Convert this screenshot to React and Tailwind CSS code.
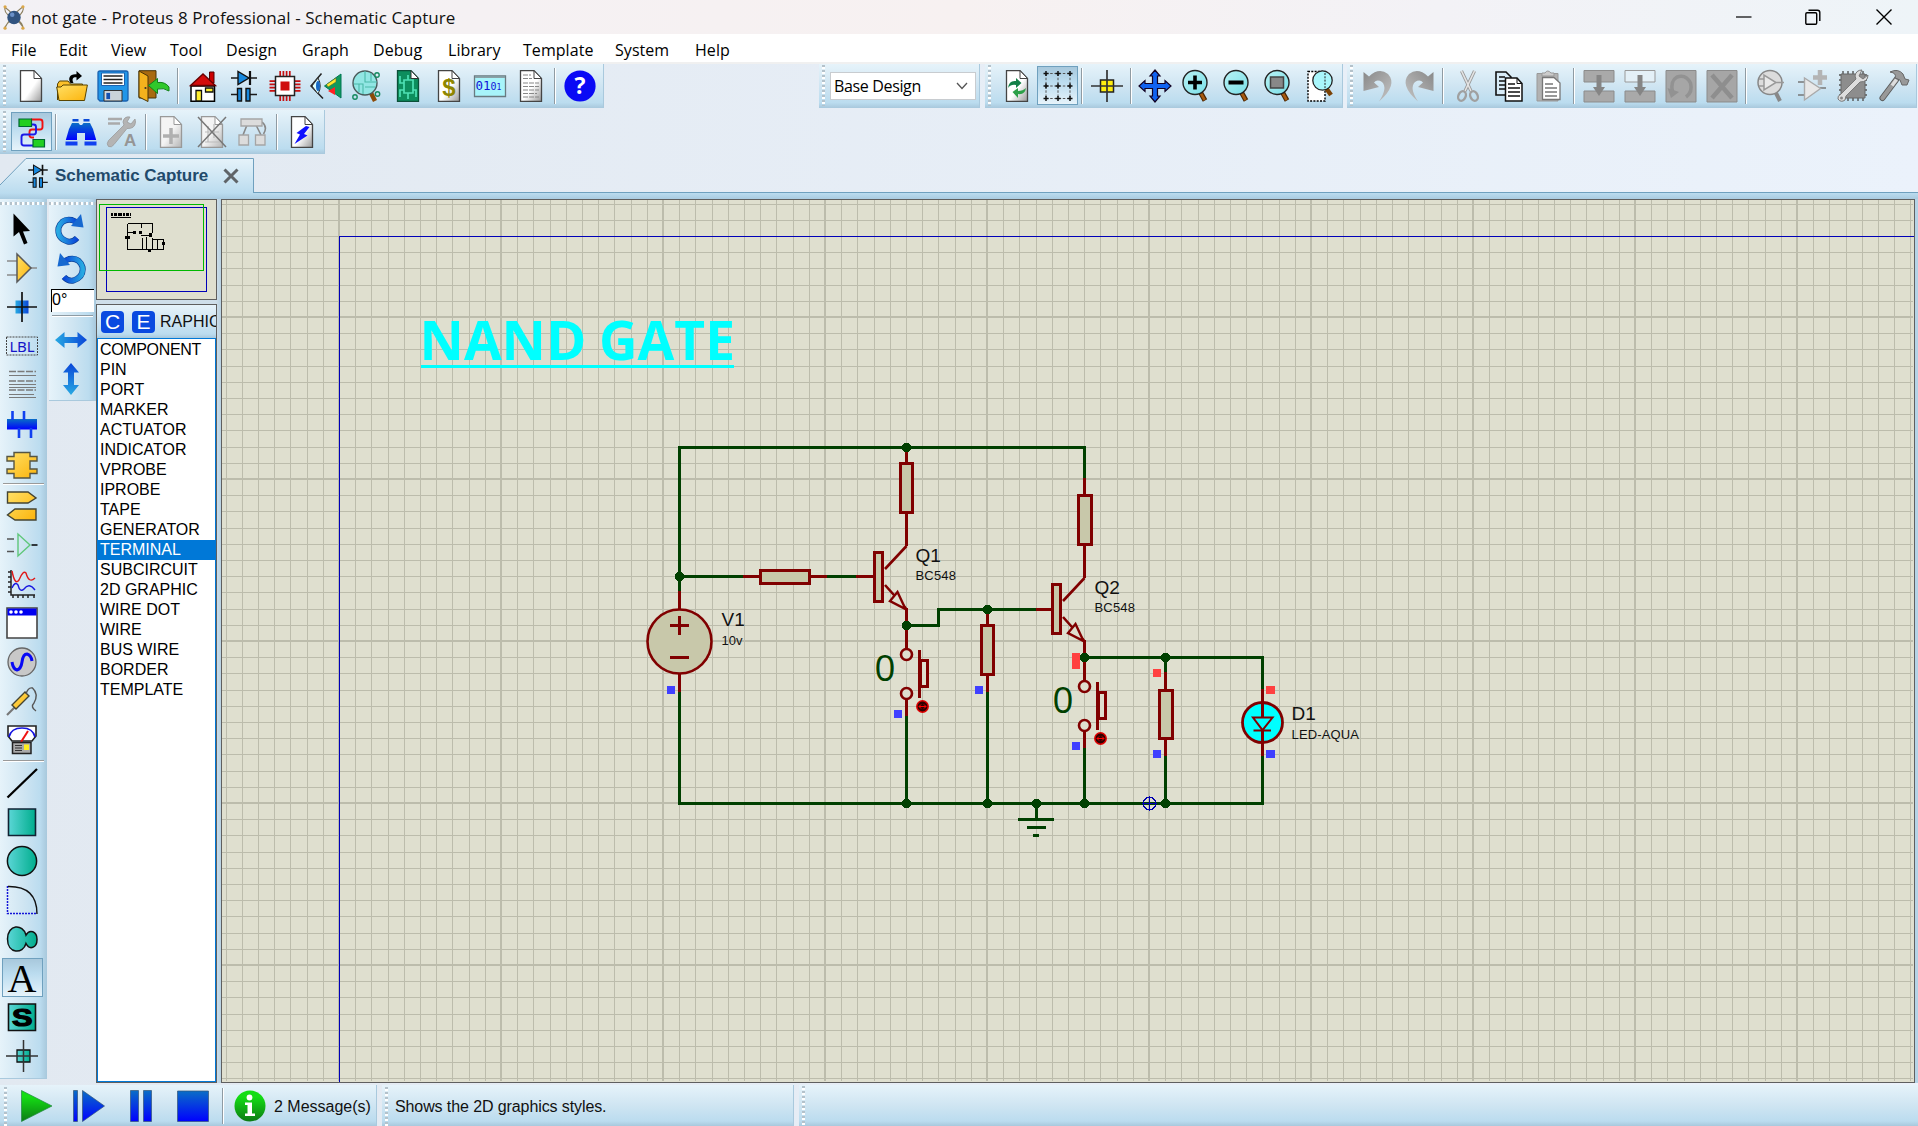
import React from "react";

const BAR = "bg-[linear-gradient(to_bottom,#e6f3fa_0%,#cfe5f2_50%,#bbdcef_88%,#a8c8dc_100%)]";
const VBAR = "bg-[linear-gradient(to_right,#e6f3fa_0%,#cfe5f2_50%,#bbdcef_85%,#a8c8dc_100%)]";
const PRESSED = "border border-[#6fa0be] bg-[linear-gradient(to_bottom,#a8c8dc,#bbdcef_40%,#e6f3fa)]";

const Ic = ({ children, className = "" }) => (
  <svg viewBox="0 0 32 32" className={"h-8 w-8 shrink-0 overflow-visible " + className} fill="none">{children}</svg>
);

const Btn = ({ children, pressed }) => (
  <div className={"flex h-[39px] w-[41px] shrink-0 items-center justify-center " + (pressed ? PRESSED : "")}>{children}</div>
);
const Sep = ({ narrow }) => (
  <div className={"flex h-[36px] shrink-0 justify-center " + (narrow ? "w-[7px]" : "w-[8px]")}>
    <div className="w-px bg-[#8f9ba3]" /><div className="w-px bg-white" />
  </div>
);
const HSep = () => <div className="mx-auto my-px h-[2px] w-[41px] shrink-0 border-t border-[#9a9a9a] bg-white" />;
const Grip = ({ tall = "h-[41px]" }) => (
  <div className={"w-[3px] shrink-0 bg-[repeating-linear-gradient(to_bottom,#b4c2cb_0_2px,#fff_2px_4px,transparent_4px_5px)] " + tall} />
);
const HGrip = () => (
  <div className="h-[3px] shrink-0 bg-[repeating-linear-gradient(to_right,#b4c2cb_0_2px,#fff_2px_4px,transparent_4px_5px)]" />
);

const Defs = () => (
  <svg className="absolute h-0 w-0">
    <defs>
      <linearGradient id="page" x1="0" y1="0" x2="1" y2="1"><stop offset=".55" stopColor="#fff" /><stop offset="1" stopColor="#999" /></linearGradient>
      <linearGradient id="pageDim" x1="0" y1="0" x2="1" y2="1"><stop offset=".5" stopColor="#f4f4f4" /><stop offset="1" stopColor="#b5b5b5" /></linearGradient>
      <linearGradient id="blueV" x1="0" y1="0" x2="0" y2="1"><stop stopColor="#0a6ec6" /><stop offset="1" stopColor="#0000ff" /></linearGradient>
      <linearGradient id="blueH" x1="0" y1="0" x2="1" y2="0"><stop stopColor="#28a9e2" /><stop offset="1" stopColor="#0a46d8" /></linearGradient>
      <linearGradient id="blueUp" x1="0" y1="0" x2="0" y2="1"><stop stopColor="#0a46d8" /><stop offset="1" stopColor="#28a9e2" /></linearGradient>
      <linearGradient id="gold" x1="0" y1="0" x2="1" y2="1"><stop stopColor="#ffe066" /><stop offset="1" stopColor="#fcb40c" /></linearGradient>
      <linearGradient id="teal" x1="0" y1="0" x2="1" y2="0"><stop stopColor="#5bd6d6" /><stop offset="1" stopColor="#00ad8d" /></linearGradient>
      <linearGradient id="green" x1="0" y1="0" x2="0" y2="1"><stop offset=".2" stopColor="#14dd14" /><stop offset="1" stopColor="#0c7a14" /></linearGradient>
      <linearGradient id="grey" x1="0" y1="0" x2="1" y2="1"><stop stopColor="#888" /><stop offset="1" stopColor="#c4c4c4" /></linearGradient>
      <linearGradient id="lens" x1="0" y1="0" x2="1" y2="1"><stop stopColor="#b8f2f4" /><stop offset="1" stopColor="#7adfe8" /></linearGradient>
      <linearGradient id="arm" x1="0" y1="0" x2="1" y2="1"><stop stopColor="#0b3fb8" /><stop offset=".5" stopColor="#1f8fe0" /><stop offset="1" stopColor="#1250c8" /></linearGradient>
    </defs>
  </svg>
);

const Sheet = ({ dim, children }) => (
  <Ic>
    <path d="M5.500 .700H19L26.500 8.500V31.300H5.500Z" fill={dim ? "url(#pageDim)" : "url(#page)"} stroke={dim ? "#999" : "#444"} strokeWidth="1.300" />
    <path d="M19 .700V8.500H26.500Z" fill="#fff" stroke={dim ? "#999" : "#444"} />
    {children}
  </Ic>
);
const DiodeCap = ({ className }) => (
  <Ic className={className}>
    <path d="M3 8H29M3 24.500H13M19 24.500H29" stroke="#1a1a1a" strokeWidth="1.700" />
    <path d="M10 1.500V14.500L21 8Z" fill="#1788de" stroke="#111" strokeWidth="1.400" />
    <path d="M22 1V15" stroke="#111" strokeWidth="2.200" />
    <path d="M9.500 18.500H13.500V31H9.500ZM18 18.500H22V31H18Z" fill="#1788de" stroke="#111" strokeWidth="1.400" />
  </Ic>
);
const Lens = ({ children, cx = 15, cy = 12.5 }) => (
  <Ic>
    <path d={`M${cx + 5} ${cy + 9}L${cx + 10} ${cy + 18}`} stroke="#4a2500" strokeWidth="5" />
    <path d={`M${cx + 6} ${cy + 11}L${cx + 9.6} ${cy + 17.5}`} stroke="#a85a10" strokeWidth="2.600" />
    <circle cx={cx} cy={cy} r="12" fill="url(#lens)" stroke="#222" strokeWidth="1.400" />
    {children}
  </Ic>
);
const Rotate = ({ className }) => (
  <Ic className={className}>
    <path d="M24 24Q20 28.500 14.500 27.500Q4 24 5.500 14Q9 4 19 6Q22 7 24 9" stroke="#0b3e93" strokeWidth="6" />
    <path d="M24 24Q20 28.500 14.500 27.500Q4 24 5.500 14Q9 4 19 6Q22 7 24 9" stroke="url(#blueH)" strokeWidth="4.600" />
    <path d="M18 12L30.500 13.500L28 0Z" fill="#1769d0" />
  </Ic>
);
const Curl = ({ className }) => (
  <Ic className={className}><path d="M1.500 2L7 6.500Q17-3 26 4Q36 15 17 31.500Q26 18 20 12Q15 9 12 12.500L17 17L1.500 21Z" fill="url(#grey)" /></Ic>
);

const I = {
  fresh: <Sheet />,
  open: (
    <Ic>
      <path d="M1.500 30V14L3.500 11H12L14.500 14H26.500V17" fill="#fbc02a" stroke="#5a4400" />
      <path d="M.700 17H5L7 15H31.400L28.500 30.500H3Z" fill="url(#gold)" stroke="#5a4400" />
      <path d="M14.500 13C11.500 8 14 3.500 20.500 4.200V1L26 6L20.500 10.500V7.300C17 7 15.500 9 17.500 13Z" fill="#000" />
    </Ic>
  ),
  save: (
    <Ic>
      <path d="M1 3Q1 1 3 1H29Q31 1 31 3V29Q31 31 29 31H3L1 29Z" fill="#2196e8" stroke="#1a62b0" strokeWidth="1.300" />
      <path d="M4.500 3H27.500V15.500H4.500Z" fill="#fff" stroke="#1a62b0" />
      <path d="M6.500 6H25.500M6.500 9.500H25.500M6.500 13H25.500" stroke="#222" strokeWidth="1.300" />
      <path d="M7 20.500H25V31H7Z" fill="#c9d2d8" stroke="#333" /><path d="M9 22.500H13.500V29.500H9Z" fill="#1450b0" stroke="#eee" strokeWidth=".6" />
    </Ic>
  ),
  exit: (
    <Ic>
      <path d="M1 .700H18V28H1Z" fill="#a86a10" stroke="#4a3408" />
      <path d="M1 1L10 6V31.500L1 27Z" fill="#f4b21d" stroke="#4a3408" /><circle cx="7.500" cy="18" r="1.100" fill="#333" />
      <path d="M10.500 15.500L19.500 8.500V12.500Q27 11.500 31 17V21Q26 17.500 19.500 19V23.500Z" fill="#30c82c" stroke="#12821a" />
    </Ic>
  ),
  home: (
    <Ic>
      <path d="M4 16H27.500V31.300H4Z" fill="#fff" stroke="#000" strokeWidth="1.500" />
      <path d="M22.500 2H27V13H22.500Z" fill="#c00" stroke="#500" />
      <path d="M3.500 15.500L16 4L28.500 15.500Z" fill="#d40c0c" stroke="#600" strokeWidth="1.300" />
      <path d="M9 20.500H14.500V31H9ZM18.500 18H26V22H18.500Z" fill="#ffef30" stroke="#111" strokeWidth="1.300" />
    </Ic>
  ),
  schem: <DiodeCap />,
  chip: (
    <Ic>
      <path d="M11.200 1V31M14.400 1V31M17.600 1V31M20.800 1V31M.500 11.200H31.500M.500 14.400H31.500M.500 17.600H31.500M.500 20.800H31.500" stroke="#c81010" strokeWidth="1.700" />
      <path d="M6.500 6.500H25.500V25.500H6.500Z" fill="#fff" stroke="#222" strokeWidth="1.500" /><path d="M11.500 11.500H20.500V20.500H11.500Z" fill="#cf0f0f" />
    </Ic>
  ),
  eye: (
    <Ic>
      <path d="M11.500 3.500L1 16L13 28.500" stroke="#222" strokeWidth="1.500" /><path d="M8 8Q12.500 16 8 24L2 16Z" fill="#dff" stroke="#333" /><ellipse cx="8" cy="16" rx="2" ry="5" fill="#1769c4" />
      <path d="M14.500 16L31 4V28Z" fill="#0f9a5c" stroke="#075" /><path d="M16.500 14.500L26 8V12L18 17Z" fill="#ffe92e" stroke="#563" strokeWidth=".6" /><path d="M18 21L25 17V25Z" fill="#f22" />
    </Ic>
  ),
  globe: (
    <Ic>
      <path d="M20 23L24 31" stroke="#8b4a08" strokeWidth="4.500" />
      <circle cx="14" cy="13" r="12" fill="#92e6e4" stroke="#4a5a5a" strokeWidth="1.400" />
      <path d="M3 14H12V24M14 1V12H26M20 3V11M8 14V22M14 17H24" stroke="#4ab8a8" strokeWidth="1.100" />
      <circle cx="4" cy="27" r="2.200" stroke="#178a60" strokeWidth="1.400" /><circle cx="26" cy="5" r="2.200" stroke="#178a60" strokeWidth="1.400" /><circle cx="26.500" cy="24" r="2.200" stroke="#178a60" strokeWidth="1.400" />
    </Ic>
  ),
  pcb: (
    <Ic>
      <path d="M5.500 .700H19L26.500 8.500V31.300H5.500Z" fill="#0d8e5d" stroke="#0b5039" strokeWidth="1.300" /><path d="M19 .700V8.500H26.500Z" fill="#fff" stroke="#333" />
      <path d="M12 10H21V23H12ZM12 13H8V6M12 20H8V27M21 20H24V27M16 10V5M16 23V29" stroke="#4fe0b4" strokeWidth="1.700" />
    </Ic>
  ),
  dollar: <Sheet><text x="16" y="26" textAnchor="middle" fontSize="24" fontWeight="700" fontFamily="Liberation Sans" fill="#8f8600">$</text></Sheet>,
  bits: (
    <Ic>
      <path d="M.500 6H31.500V26.500H.500Z" fill="#a8f4fa" stroke="#6a7a80" strokeWidth="1.300" /><path d="M1 6.500H31V8H1Z" fill="#8aa0a6" />
      <text x="1.500" y="20" fontSize="12.500" fontFamily="DejaVu Sans Mono" fill="#1212d8">01<tspan fontSize="10">0</tspan><tspan fontSize="8">1</tspan></text>
    </Ic>
  ),
  report: <Sheet><path d="M8 5H16M8 8.500H17M8 13H24M8 16.500H24M8 20H24M8 23.500H22M8 27H24" stroke="#888" strokeWidth="1.200" strokeDasharray="5 1" /></Sheet>,
  help: (
    <Ic>
      <circle cx="16" cy="16" r="15.600" fill="#0a0af5" /><text x="16" y="24" textAnchor="middle" fontSize="23" fontWeight="700" fontFamily="Open Sans" fill="#fff">?</text>
    </Ic>
  ),
  wires: (
    <Ic>
      <path d="M15 3.500H24Q26.500 3.500 26.500 6V11Q26.500 13.500 24 13.500H16Q13.500 13.500 13.500 16V19Q13.500 21.500 16 21.500H18" stroke="#f01010" strokeWidth="1.900" />
      <path d="M15 8.500H17.500Q20 8.500 20 11V16Q20 18.500 17.500 18.500H8Q5.500 18.500 5.500 21V27Q5.500 29.500 8 29.500H17" stroke="#1a1ae8" strokeWidth="1.900" />
      <path d="M3 3H15.500V10.500H3ZM17 23.500H28.500V31H17Z" fill="#22cf22" stroke="#063" strokeWidth="1.200" />
    </Ic>
  ),
  binoc: (
    <Ic>
      <path d="M7.500 3H13.500V5.500H7.500ZM18.500 3H24.500V5.500H18.500Z" fill="#0a4ad8" />
      <path d="M7 7H13.500L15 9H17L18.500 7H25L28 13L31.200 24H20V17H12V24H.800L4 13Z" fill="url(#blueV)" />
      <path d="M.500 25.500H12.500V29.500H.500ZM19.500 25.500H31.500V29.500H19.500Z" fill="#1040f0" />
    </Ic>
  ),
  wrenchA: (
    <Ic>
      <path d="M2 3H16M2 7.500H14" stroke="#aaa" strokeWidth="2.400" /><path d="M29 3L25 8L21 6L24 1Q18 0 17 6L18 9L2.500 24.500Q0 28 2.500 30.500Q5.500 32 8 28.500L21 12.500Q29 13 29.500 6Z" fill="#b4b4b4" stroke="#9a9a9a" strokeWidth=".8" />
      <text x="18" y="30" fontSize="17" fontWeight="700" fontFamily="Liberation Sans" fill="#959595">A</text>
    </Ic>
  ),
  addDoc: <Sheet dim><path d="M16 12V28M8 20H24" stroke="#b0b0b0" strokeWidth="3.500" /></Sheet>,
  delDoc: <Sheet dim><path d="M9 16H23M12 10V26M18 8V22M9 26H24" stroke="#bbb" strokeWidth="1.200" /><path d="M2 1L30 31M30 1L2 31" stroke="#777" strokeWidth="1.500" /></Sheet>,
  hier: (
    <Ic>
      <path d="M10 9L6 19M19 9L24 19M25 6Q31 11 26.500 18" stroke="#888" strokeWidth="1.600" />
      <path d="M4 3H25V10H4ZM2 19H11.500V29H2ZM18.500 19H28V29H18.500Z" fill="#dcdcdc" stroke="#a5a5a5" strokeWidth="1.300" />
    </Ic>
  ),
  bolt: <Sheet><path d="M20 10L10.500 17L14 18.500L8.500 28L21.500 19.500L18 18L23.500 11Z" fill="#1010ff" /></Sheet>,
  refresh: <Sheet><path d="M7 18Q8 10 15 11V8L20.500 13L15 18V15Q10 14 7 18Z" fill="#148048" /><path d="M25 18Q24 25 17 24V28L11.500 22L17 18V21Q22 21 25 18Z" fill="#2da048" /></Sheet>,
  grid: (
    <Ic>
      <path d="M4 3.500H28M4 16H28M4 28.500H28M4 3.500V28.500M16 3.500V28.500M28 3.500V28.500" stroke="#555" strokeWidth="1" strokeDasharray="2.500 1.700" />
      {[4, 16, 28].map((x) => [3.5, 16, 28.5].map((y) => <path key={x + "," + y} d={`M${x - 2.5} ${y}h5M${x} ${y - 2.5}v5`} stroke="#111" strokeWidth="1.500" />))}
    </Ic>
  ),
  origin: (
    <Ic><path d="M9.500 10H22.500V22H9.500Z" fill="#ffee10" stroke="#222" strokeWidth="1.500" /><path d="M16 0V32M0 16H32" stroke="#333" strokeWidth="1.700" /></Ic>
  ),
  pan: (
    <Ic>
      <path d="M16 0L21 6H18.500V13.500H26V10.500L32 16L26 21.500V18.500H18.500V26H21L16 32L11 26H13.500V18.500H6V21.500L0 16L6 10.500V13.500H13.500V6H11Z" fill="#0f62f0" stroke="#102" strokeWidth="1.200" />
    </Ic>
  ),
  zin: <Lens><path d="M15 5.500V19.500M8 12.500H22" stroke="#000" strokeWidth="3.600" /></Lens>,
  zout: <Lens><path d="M7.500 12.500H22.500" stroke="#000" strokeWidth="4" /></Lens>,
  zall: <Lens><path d="M8.500 7H21.500V18H8.500Z" fill="#888" stroke="#444" strokeWidth="1.500" /></Lens>,
  zarea: (
    <Ic className="translate-x-px">
      <path d="M4 1.500H21V31H4Z" fill="#fff" stroke="#000" strokeWidth="1.400" strokeDasharray="2 1.300" /><path d="M22 18L27 25" stroke="#7a4206" strokeWidth="4.500" />
      <circle cx="18.500" cy="10.500" r="9.700" fill="#a9f6fb" stroke="#222" strokeWidth="1.300" /><path d="M21 3V19" stroke="#222" strokeDasharray="2 1.300" />
    </Ic>
  ),
  undo: <Curl />,
  redo: <Curl className="-scale-x-100" />,
  cut: (
    <Ic>
      <path d="M9.500 1L19 21M22.500 1L13 21" stroke="#999" strokeWidth="3.200" /><path d="M9.500 1L19 21M22.500 1L13 21" stroke="#e4e4e4" strokeWidth="1.600" />
      <ellipse cx="10" cy="26" rx="3.600" ry="5" transform="rotate(25 10 26)" stroke="#a0a0a0" strokeWidth="2.400" /><ellipse cx="22" cy="26" rx="3.600" ry="5" transform="rotate(-25 22 26)" stroke="#a0a0a0" strokeWidth="2.400" />
    </Ic>
  ),
  copy: (
    <Ic>
      <path d="M3 2H13L18 7V25H3Z" fill="#d8ecf8" stroke="#111" strokeWidth="1.600" /><path d="M6 7H12M6 11H12M6 15H12M6 19H12" stroke="#111" strokeWidth="1.400" />
      <path d="M12.500 8H24L29 13.500V31H12.500Z" fill="#fff" stroke="#111" strokeWidth="1.500" /><path d="M24 8V13.500H29" stroke="#111" /><path d="M15 14H22M15 18H27M15 22H27M15 26H27" stroke="#111" strokeWidth="1.400" />
    </Ic>
  ),
  paste: (
    <Ic>
      <path d="M3 3.500H24V31H3Z" fill="#b2b2b2" stroke="#999" /><path d="M8 6V3H11Q13.500-1 17 3H20V6Z" fill="#ccc" stroke="#999" />
      <path d="M8.500 7.500H20L26 13V29.500H8.500Z" fill="#fff" stroke="#777" strokeWidth="1.300" /><path d="M11 14H19M11 18H23M11 22H23M11 26H23" stroke="#777" strokeWidth="1.300" />
    </Ic>
  ),
  bcopy: (
    <Ic><path d="M1 .500H31V12H1ZM1 21H31V32H1Z" fill="#a9a9a9" stroke="#8b8b8b" /><path d="M13.500 5H18.500V17H22L16 26L10 17H13.500Z" fill="#858585" /></Ic>
  ),
  bmove: (
    <Ic><path d="M1 .500H31V12H1Z" fill="#e4f0f7" stroke="#999" /><path d="M1 21H31V32H1Z" fill="#a9a9a9" stroke="#8b8b8b" /><path d="M13.500 5H18.500V17H22L16 26L10 17H13.500Z" fill="#858585" /></Ic>
  ),
  brot: (
    <Ic><path d="M1 .500H31V32H1Z" fill="#a6a6a6" stroke="#8b8b8b" /><path d="M21 27Q28 22 25.500 13Q21 4 12 7Q5 11 7.500 22" stroke="#929292" strokeWidth="3.500" /><path d="M2.500 18L6 28L14 22Z" fill="#929292" /></Ic>
  ),
  bdel: (
    <Ic><path d="M1 .500H31V32H1Z" fill="#a6a6a6" stroke="#8b8b8b" /><path d="M6 5L26 28M26 5L6 28" stroke="#8e8e8e" strokeWidth="4.500" /></Ic>
  ),
  pick: (
    <Ic>
      <path d="M21 23L25 31" stroke="#888" strokeWidth="4" /><circle cx="15" cy="12.500" r="12" fill="#dcdcdc" stroke="#888" strokeWidth="1.500" /><path d="M9 5V20L21 12.500ZM4 9H9M4 16H9M21 12.500H29" stroke="#999" strokeWidth="1.500" fill="#e9e9e9" />
    </Ic>
  ),
  make: (
    <Ic><path d="M2 12H8M2 25H8M24 18H30" stroke="#777" strokeWidth="1.700" /><path d="M8.500 8V30L24.500 18.500Z" fill="#e8e8e8" stroke="#aaa" strokeWidth="1.400" /><path d="M24 0V15M17 7.500H31" stroke="#b4b4b4" strokeWidth="4.500" /></Ic>
  ),
  pack: (
    <Ic>
      <path d="M2 5H30M2 10H30M2 15H30M2 20H30M2 25H30M6 1V31M11 1V31M16 1V31M21 1V31M26 1V31" stroke="#555" strokeWidth="1.400" /><path d="M4 4H28V28H4Z" fill="#8d8d8d" stroke="#666" />
      <path d="M31 5L26 9L22 6L25 0Q19 0 18 6L19 9L4 24Q0 26 1 29Q4 33 8 30L9 26L23 12Q31 12 31 5Z" fill="#ddd" stroke="#777" /><circle cx="4.500" cy="28" r="1.500" fill="#888" />
    </Ic>
  ),
  hammer: (
    <Ic>
      <path d="M18 10L4.500 28" stroke="#555" strokeWidth="6" strokeLinecap="round" /><path d="M18 10L4.500 28" stroke="#999" strokeWidth="4.300" strokeLinecap="round" /><path d="M18.500 9.500L14 15.500" stroke="#ddd" strokeWidth="3.300" />
      <path d="M12 2Q20-2 25 4L27 9L31 10L29 15L24 15L22 10L17 8Q19 3 12 2Z" fill="#999" stroke="#666" />
    </Ic>
  ),
  arrow: <Ic><path d="M7.500 .500V23.500L13 19L18 31.500L21.500 30L17 18.500L24 18Z" fill="#000" /></Ic>,
  amp: <Ic><path d="M1 9H12M1 23H12M24 16H31" stroke="#8a8a8a" strokeWidth="1.700" /><path d="M11 2V30L25 16Z" fill="url(#gold)" stroke="#5a5a5a" strokeWidth="1.500" /></Ic>,
  junction: <Ic><path d="M9.500 9.500H22.500V22.500H9.500Z" fill="url(#blueH)" /><path d="M16 1V31M1 16H31" stroke="#111" strokeWidth="1.700" /></Ic>,
  lbl: <Ic><path d="M.500 7H31.500V25H.500Z" stroke="#444" strokeDasharray="2 1" /><text x="16" y="21.500" textAnchor="middle" fontSize="15" textLength="25" fontFamily="Noto Sans" fill="#1414c8">LBL</text></Ic>,
  script: <Ic><path d="M3 2.500H30M3 12H30M3 21H30" stroke="#7a7a7a" strokeWidth="1.300" strokeDasharray="7 1.500" /><path d="M3 6.500H30M3 15.500H30M3 28.500H30M3 18.500H30M3 25.500H28" stroke="#7a7a7a" strokeWidth="1.200" /></Ic>,
  bus: <Ic><path d="M1 11H31V21.500H1Z" fill="url(#blueV)" /><path d="M6.500 3V12M18 3V12M13 20V30M25 20V30" stroke="#1040f0" strokeWidth="2.600" /></Ic>,
  sub: <Ic className="translate-y-[2px]"><path d="M8 3.500H24V7.500H31V12H24V20H31V24.500H24V29H8V24.500H1V20H8V12H1V7.500H8Z" fill="url(#gold)" stroke="#554" strokeWidth="1.400" /></Ic>,
  term: <Ic><path d="M1.500 2H22L30 8L22 13H1.500ZM30 19H9L1.500 25L9 30H30Z" fill="url(#gold)" stroke="#443" strokeWidth="1.400" /></Ic>,
  pins: <Ic><path d="M1 10H8M1 22.500H8" stroke="#555" strokeWidth="1.700" /><path d="M12 5V27L24 16Z" stroke="#5fc77a" strokeWidth="1.400" /><path d="M25.500 16H31.500" stroke="#000" strokeWidth="1.500" /></Ic>,
  graph: (
    <Ic>
      <path d="M5 2V27H29M2 4H5M2 9H5M2 14H5M2 19H5M2 24H5M7 27V30M12 27V30M17 27V30M22 27V30M28 27V30" stroke="#222" strokeWidth="1.500" />
      <path d="M6 3Q9 18 13 12Q17 2 20 5Q23 16 29 10" stroke="#e01818" strokeWidth="1.400" /><path d="M6 20Q9 13 12 17Q14 25 18 21Q23 14 29 22" stroke="#1818e0" strokeWidth="1.400" />
    </Ic>
  ),
  tape: <Ic><path d="M1 1H31V31H1Z" fill="#fff" stroke="#444" strokeWidth="1.600" /><path d="M1.500 1.500H30.500V8.500H1.500Z" fill="#0000f0" /><circle cx="5" cy="5" r="1.800" fill="#fff" /><circle cx="10" cy="5" r="1.800" fill="#fff" /><circle cx="15" cy="5" r="1.800" fill="#fff" /></Ic>,
  gen: <Ic><circle cx="16" cy="16" r="14" fill="#c8c8c8" stroke="#666" strokeWidth="1.300" /><path d="M6 16Q7 23 11 24Q15 23 16 16Q17 8 21 8Q25 9 26 15" stroke="#0808f5" strokeWidth="3" /></Ic>,
  probe: <Ic><path d="M1 30L9 22" stroke="#777" strokeWidth="2.200" /><path d="M6 20L19 7L23 11L10 24Z" fill="url(#gold)" stroke="#443" strokeWidth="1.400" /><path d="M20 9Q22 2 26.500 3Q33 9 28 18Q24 22 30 26" stroke="#555" strokeWidth="1.400" /></Ic>,
  meter: (
    <Ic>
      <path d="M2 2H30V12L26 17H6L2 12Z" fill="#fff" stroke="#222" strokeWidth="1.600" /><path d="M3 13Q5 4 16 4Q27 4 29 13" stroke="#1414e0" strokeWidth="1.600" /><path d="M15 18L22 7" stroke="#e11" strokeWidth="2" />
      <path d="M6.500 18.500H25V29.500H6.500Z" fill="#aaa" stroke="#222" strokeWidth="1.500" /><path d="M9 21.500H16M9 24H16M9 26.500H16" stroke="#333" /><path d="M18 20.500H23V26H18Z" fill="#ffee20" />
    </Ic>
  ),
  line: <Ic><path d="M1.500 30.500L31 2" stroke="#000" strokeWidth="2.300" /></Ic>,
  box: <Ic><path d="M2.500 3H29.500V29.500H2.500Z" fill="url(#teal)" stroke="#123" strokeWidth="1.600" /></Ic>,
  circle: <Ic><circle cx="16" cy="16" r="14.600" fill="url(#teal)" stroke="#111" strokeWidth="1.500" /></Ic>,
  arc: <Ic><path d="M1.500 2V29.500H31" stroke="#1414d8" strokeWidth="1.500" strokeDasharray="2 1" /><path d="M2 2.500Q31 2 31 30" stroke="#111" strokeWidth="1.400" /></Ic>,
  blob: <Ic><path d="M20 12C17 .500 1.500 1 1.500 16C1.500 31 17 31.500 20 20.500C23.500 27.500 31 25 31 16.500C31 8 23.500 6 20 12Z" fill="url(#teal)" stroke="#111" strokeWidth="1.500" /></Ic>,
  text: <Ic><text x="16" y="30" textAnchor="middle" fontSize="40" fontFamily="Liberation Serif" fill="#000">A</text></Ic>,
  sym: <Ic><path d="M2.500 3H29.500V29.500H2.500Z" fill="url(#teal)" stroke="#111" strokeWidth="1.600" /><text x="6" y="25" fontSize="24" fontWeight="700" textLength="20.500" lengthAdjust="spacingAndGlyphs" fontFamily="Liberation Sans" fill="#000" stroke="#000" strokeWidth="1.200">S</text></Ic>,
  mark: <Ic><path d="M11 10H24V22H11Z" fill="url(#teal)" stroke="#111" strokeWidth="1.300" /><path d="M17.500 0V32M0 16H32" stroke="#333" strokeWidth="1.500" /></Ic>,
  cw: <Rotate className="-translate-x-[4px]" />,
  ccw: <Rotate className="-translate-x-px -scale-x-100" />,
  hflip: <Ic><path d="M0 16L9.500 8V13H22.500V8L32 16L22.500 24V19H9.500V24Z" fill="url(#blueH)" /></Ic>,
  vflip: <Ic><path d="M16 0L24 9.500H19V22H24L16 32L8 22H13V9.500H8Z" fill="url(#blueUp)" /></Ic>,
};

const MENUS = [["File", "w-[48px]"], ["Edit", "w-[52px]"], ["View", "w-[59px]"], ["Tool", "w-[56px]"], ["Design", "w-[76px]"], ["Graph", "w-[71px]"], ["Debug", "w-[75px]"], ["Library", "w-[75px]"], ["Template", "w-[92px]"], ["System", "w-[80px]"], ["Help", "w-[60px]"]];
const STYLES = ["COMPONENT", "PIN", "PORT", "MARKER", "ACTUATOR", "INDICATOR", "VPROBE", "IPROBE", "TAPE", "GENERATOR", "TERMINAL", "SUBCIRCUIT", "2D GRAPHIC", "WIRE DOT", "WIRE", "BUS WIRE", "BORDER", "TEMPLATE"];

const Tools = ({ items }) => items.map((n, i) => (n === "|" ? <Sep key={i} /> : <Btn key={i} pressed={n === "grid" || n === "wires"}>{I[n]}</Btn>));
const Bar = ({ className = "", children }) => (
  <div className={"flex h-[44px] items-center border-r border-[#a9c9dd] pb-px " + BAR + " " + className}>{children}</div>
);

function Header() {
  return (
    <>
      <div className="flex h-[34px] items-center bg-[linear-gradient(to_right,#f3f1f5,#f7f1f1_50%,#f3f2f6_75%,#eef4f8)]">
        <svg viewBox="0 0 24 28" className="ml-[2px] h-[25px] w-[24px]" fill="none">
          <path d="M1 2Q10 8 23 26M22 2Q12 9 1 26M2 2Q0 8 8 13M22 1Q24 8 16 13M2 27Q3 20 9 17M22 26Q22 20 16 17" stroke="#8c8060" strokeWidth="1.200" />
          <circle cx="12" cy="14" r="7.500" fill="#31537f" /><circle cx="10" cy="11" r="2.500" fill="#6a90c8" />
          {[[2, 2], [22, 2], [2, 26], [22, 26]].map(([x, y]) => <circle key={x + "-" + y} cx={x} cy={y} r="1.800" fill="#dba748" />)}
        </svg>
        <span className="ml-[5px] mt-px whitespace-nowrap font-['Open_Sans'] text-[17px] tracking-[0.07px] text-[#111]">not gate - Proteus 8 Professional - Schematic Capture</span>
        <div className="ml-auto flex items-center pr-[26px]">
          <svg viewBox="0 0 16 16" className="h-4 w-4"><path d="M0 8H15.500" stroke="#000" strokeWidth="1.200" /></svg>
          <svg viewBox="0 0 16 16" className="ml-[53px] h-4 w-4" fill="none"><path d="M.800 5Q.800 3.800 2 3.800H10.500Q11.700 3.800 11.700 5V14Q11.700 15.200 10.500 15.200H2Q.800 15.200 .800 14ZM3.500 1.200H12.500Q14.800 1.200 14.800 3.500V12" stroke="#000" strokeWidth="1.400" /></svg>
          <svg viewBox="0 0 16 16" className="ml-[55px] h-4 w-4"><path d="M.500 .500L15.500 15.500M15.500 .500L.500 15.500" stroke="#000" strokeWidth="1.400" /></svg>
        </div>
      </div>
      <div className="flex h-[28px] items-center bg-white pl-[11px] pt-[3px] font-['Open_Sans'] text-[16px] tracking-[0.05px] text-black">
        {MENUS.map(([m, w]) => <span key={m} className={w}>{m}</span>)}
      </div>
      <div className="h-[2px] bg-[#f0f0f0]" />
    </>
  );
}

function Toolbars() {
  return (
    <div className="h-[94px]">
      <div className="flex">
        <Bar className="w-[604px] pl-[3px]">
          <Grip /><div className="w-[4px]" />
          <Tools items={["fresh", "open", "save", "exit", "|", "home", "schem", "chip", "eye", "globe", "pcb", "dollar", "bits", "report", "|", "help"]} />
        </Bar>
        <Bar className="ml-[215px] w-[161px] pl-[3px]">
          <Grip />
          <div className="ml-[5px] flex h-[28px] w-[146px] items-center justify-between border border-[#c8ccd0] bg-white pl-[3px] pr-[7px] font-['Open_Sans'] text-[16px] tracking-[-0.35px]">
            <span className="whitespace-nowrap">Base Design</span>
            <svg viewBox="0 0 12 8" className="h-[8px] w-[12px]" fill="none"><path d="M1 1L6 6.500L11 1" stroke="#555" strokeWidth="1.300" /></svg>
          </div>
        </Bar>
        <Bar className="ml-[5px] w-[358px] pl-[3px]">
          <Grip /><div className="w-[5px]" />
          <Tools items={["refresh", "grid"]} /><Sep /><Tools items={["origin"]} /><Sep narrow /><Tools items={["pan", "zin", "zout", "zall", "zarea"]} />
        </Bar>
        <Bar className="ml-[4px] w-[570px] pl-[3px]">
          <Grip /><div className="w-[4px]" />
          <Tools items={["undo", "redo", "|", "cut", "copy", "paste", "|", "bcopy", "bmove", "brot", "bdel", "|", "pick", "make", "pack", "hammer"]} />
        </Bar>
      </div>
      <Bar className="mt-[2px] w-[325px] pl-[3px]">
        <Grip /><div className="w-[5px]" />
        <Tools items={["wires", "|", "binoc", "wrenchA", "|", "addDoc", "delDoc", "hier", "|", "bolt"]} />
      </Bar>
    </div>
  );
}

function TabStrip() {
  return (
    <div className="h-[41px]">
      <div className="flex h-[35px]">
        <div className="relative flex h-[35px] w-[254px] items-center">
          <svg viewBox="0 0 254 35" className="absolute inset-0 h-full w-full">
            <defs><linearGradient id="tab" x1="0" y1="0" x2="0" y2="1"><stop stopColor="#e6f3fa" /><stop offset="1" stopColor="#bbdcef" /></linearGradient></defs>
            <path d="M0 27L26 .500H253.500V35H0Z" fill="url(#tab)" /><path d="M0 27L26 .500H253.500V35" fill="none" stroke="#6fa0be" />
          </svg>
          <div className="relative flex items-center pl-[26px]">
            <DiodeCap className="!h-[24px] !w-[24px]" />
            <span className="ml-[5px] w-[153px] whitespace-nowrap font-['Liberation_Sans'] text-[17px] font-bold tracking-[-0.05px] text-[#224a6b]">Schematic Capture</span>
            <svg viewBox="0 0 16 16" className="ml-[15px] h-4 w-4"><path d="M1.500 1.500L14.500 14.500M14.500 1.500L1.500 14.500" stroke="#5f6468" strokeWidth="3" /></svg>
          </div>
        </div>
        <div className="flex-1 border-b border-[#6fa0be]" />
      </div>
      <div className="h-[6px] bg-[linear-gradient(to_bottom,#bbdcef,#a9cbe0)]" />
    </div>
  );
}

const MODES = ["arrow", "amp", "junction", "lbl", "script", "bus", "sub", "|", "term", "pins", "graph", "tape", "gen", "probe", "meter", "|", "line", "box", "circle", "arc", "blob", "text", "sym", "mark"];

function LeftColumns() {
  return (
    <>
      <div className={"flex h-[880px] w-[47px] flex-col border-b border-[#a9c9dd] pt-[3px] " + VBAR}>
        <HGrip /><div className="h-[4px] shrink-0" />
        {MODES.map((m, i) => m === "|" ? <HSep key={i} /> : <div key={i} className={"ml-[2px] flex h-[39px] w-[41px] shrink-0 items-center justify-center pr-px " + (m === "text" ? PRESSED : "")}>{I[m]}</div>)}
      </div>
      <div className="w-[49px] pl-[2px]">
        <div className={"flex h-[202px] w-[47px] flex-col border-b border-[#a9c9dd] pt-[3px] " + VBAR}>
          <HGrip />
          <div className="mt-[5px] flex h-[39px] shrink-0 items-center justify-center">{I.cw}</div>
          <div className="flex h-[39px] shrink-0 items-center justify-center">{I.ccw}</div>
          <div className="ml-[2px] mt-[1px] h-[23px] w-[43px] shrink-0 border-l border-t border-black bg-white font-['Liberation_Sans'] text-[16px] leading-[20px] text-black">0°</div>
          <div className="ml-[3px] mt-[3px] h-[2px] w-[41px] shrink-0 border-t border-[#8f9ba3] bg-white" />
          <div className="mt-[3px] flex h-[39px] shrink-0 items-center justify-center pr-[4px]">{I.hflip}</div>
          <div className="flex h-[39px] shrink-0 items-center justify-center pr-[4px]">{I.vflip}</div>
        </div>
      </div>
    </>
  );
}

function Sidebar() {
  return (
    <div className="flex h-[884px] w-[125px] flex-col bg-[linear-gradient(to_right,#cfdfea_0_120px,#b9d2e2)]">
      <svg viewBox="96 199 121 101" className="h-[101px] w-[121px] shrink-0" fill="none" shapeRendering="crispEdges">
        <path d="M96.500 199.500H216.500V299.500H96.500Z" fill="#dfdfcf" stroke="#5f5f5f" />
        <path d="M106.500 207.500H206.500V291.500H106.500Z" stroke="#0000b8" /><path d="M99.500 204.500H203.500V270.500H99.500Z" stroke="#00b800" />
        <path d="M111 214.500H131" stroke="#000" strokeWidth="3" strokeDasharray="2 1 3 1 4 1" /><path d="M111 217.500H131" stroke="#000" />
        <path d="M127.500 223.500H152.500V233M127.500 223.500V249.500H163.500V239.500H152.500M141.500 223.500V228M142.500 238V249M146.500 236.500V249M152.500 238V249M157.500 239V249M127 232.500H133M141 235.500H150" stroke="#000" />
        <path d="M125 237.500H130M139 232.500H142M150.500 233V237M162 243.500H165M148 250.500H151M133 232.500H136" stroke="#000" strokeWidth="3" />
      </svg>
      <div className="mt-[4px] flex min-h-0 w-[121px] flex-1 flex-col border border-[#5f5f5f] bg-white">
        <div className={"flex h-[33px] shrink-0 items-center overflow-hidden pl-[4px] " + BAR}>
          <span className="mr-[8px] flex h-[22px] w-[23px] shrink-0 items-center justify-center rounded-[4px] bg-[#0a4ae0] font-['Liberation_Sans'] text-[21px] leading-none text-white">C</span>
          <span className="mr-[5px] flex h-[22px] w-[23px] shrink-0 items-center justify-center rounded-[4px] bg-[#0a4ae0] font-['Liberation_Sans'] text-[21px] leading-none text-white">E</span>
          <span className="whitespace-nowrap font-['Liberation_Sans'] text-[16px] text-[#111]">RAPHIC</span>
        </div>
        <div className="flex-1 border border-[#0078d7] bg-white pt-px font-['Liberation_Sans'] text-[16px] leading-[20px] text-black">
          {STYLES.map((s) => <div key={s} className={"h-[20px] whitespace-nowrap pl-[2px] " + (s === "TERMINAL" ? "bg-[#0078d7] text-white" : s === "COMPONENT" ? "tracking-[-0.35px]" : "")}>{s}</div>)}
        </div>
      </div>
    </div>
  );
}

const R = "#800000";
const G = "#004000";
const FILL = "#c8c8aa";
const DOTS = [[906.5, 447.5], [679.5, 576.5], [906.5, 625.5], [987.5, 609.5], [906.5, 803.5], [987.5, 803.5], [1036.5, 803.5], [1084.5, 803.5], [1165.5, 803.5], [1084.5, 657.5], [1165.5, 657.5]];
const cols = Array.from({ length: 105 }, (_, i) => i - 7);
const rows = Array.from({ length: 55 }, (_, i) => i - 17);

const Res = ({ x, y, w = 13, h = 49 }) => <rect x={x} y={y} width={w} height={h} fill={FILL} stroke={R} strokeWidth="3" />;
const Npn = ({ x, y }) => (
  <g transform={`translate(${x} ${y})`}>
    <path d="M-21-8L.500-31M-21 8L0 31.500" stroke={R} strokeWidth="2.600" shapeRendering="auto" />
    <path d="M-8.500 15L-16 24L-.500 32Z" fill="#dfdfcf" stroke={R} strokeWidth="2.400" shapeRendering="auto" />
    <rect x="-31.500" y="-24.500" width="8" height="49" fill={FILL} stroke={R} strokeWidth="3" />
  </g>
);
const Button = ({ x, y }) => (
  <g transform={`translate(${x} ${y})`}>
    <g shapeRendering="auto"><circle cx="0" cy="0" r="5.500" fill="#dfdfcf" stroke={R} strokeWidth="2.600" /><circle cx="0" cy="39" r="5.500" fill="#dfdfcf" stroke={R} strokeWidth="2.600" /></g>
    <rect x="14" y="6" width="7" height="26" fill="#dfdfcf" stroke={R} strokeWidth="3" /><path d="M13-4.500V43.500" stroke={R} strokeWidth="3" />
    <g shapeRendering="auto"><circle cx="16" cy="52" r="5.700" fill="#300000" stroke="#e00000" strokeWidth="1.500" /><path d="M12.500 52H19.500M14.500 50L12.500 52L14.500 54M17.500 50L19.500 52L17.500 54" stroke="#f00" strokeWidth="1" /></g>
    <text x="-32" y="26.500" fontSize="36" textLength="21" lengthAdjust="spacingAndGlyphs" fontFamily="Open Sans" fill={G}>0</text>
  </g>
);

function Canvas() {
  return (
    <div className="h-[884px] w-[1694px] border border-[#5f5f5f] bg-[#dfdfcf]">
      <svg viewBox="222 200 1692 882" className="h-[882px] w-[1692px] font-['Liberation_Sans']" fill="none" shapeRendering="crispEdges">
        {cols.map((k) => { const x = Math.floor(339.4 + 16.2 * k), m = k % 10 === 0; return <rect key={k} x={m ? x - 1 : x} y="200" width={m ? 2 : 1} height="881" fill="#bcbcac" />; })}
        {rows.map((k) => { const y = Math.floor(479.4 + 16.2 * k), m = k % 10 === 0; return <rect key={k} x="222" y={m ? y - 1 : y} width="1691" height={m ? 2 : 1} fill="#bcbcac" />; })}
        <path d="M339.500 1082V236.500H1914" stroke="#0000b8" />
        <g fontSize="53" fontWeight="700" fontFamily="Open Sans" fill="#0ff" shapeRendering="auto">
          <text x="419.500" y="360" textLength="167" lengthAdjust="spacingAndGlyphs">NAND</text>
          <text x="599" y="360" textLength="136" lengthAdjust="spacingAndGlyphs">GATE</text>
        </g>
        <rect x="421" y="365" width="313" height="3" fill="#0ff" />
        <g stroke={G} strokeWidth="3">
          <path d="M679.500 592V447.500H1084.500V479M679.500 576.500H744M826 576.500H857M679.500 692V803.500H1262.500V755M906.500 625.500H938.500V609.500H1036M906.500 715V803M987.500 692V803M1084.500 747V803M1165.500 755V803M1080 657.500H1262.500V689M1165.500 657V672" />
          <path d="M1036.500 803V819M1018 819.500H1054M1027 827.500H1046M1033 835.500H1039" />
        </g>
        <path d="M679.500 591V609M679.500 674V692M743 576.500H759M811 576.500H827M856 576.500H873M906.500 449V462M906.500 512V546M906.500 608V649M906.500 700V716M987.500 611V624M987.500 675V692M1036 609.500H1051M1084.500 478V494M1084.500 546V578M1084.500 640V681M1084.500 732V748M1165.500 672V689M1165.500 740V756M1262.500 689V703M1262.500 742V756" stroke={R} strokeWidth="3" />
        <circle cx="679.500" cy="641.500" r="32" fill={FILL} stroke={R} strokeWidth="2.600" shapeRendering="auto" />
        <path d="M670 625.500H689M679.500 616V635M670 657.500H689" stroke={R} strokeWidth="3" />
        <Res x={760.5} y={570.5} w={49} h={13} /><Res x={900.5} y={463.5} w={12} /><Res x={981.5} y={625.5} w={12} /><Res x={1078.5} y={495.5} /><Res x={1159.5} y={690.5} w={13} h={48} />
        <Npn x={906} y={577} /><Npn x={1084} y={609} />
        <Button x={906.5} y={654.5} /><Button x={1084.5} y={686.5} />
        <circle cx="1262.500" cy="722.500" r="20" fill="#0ff" stroke={R} strokeWidth="2.800" shapeRendering="auto" />
        <path d="M1262.500 703V717M1262.500 729V742" stroke={R} strokeWidth="3" /><path d="M1253 717.500H1272.500L1262.500 730ZM1253.500 730.500H1271" stroke={R} strokeWidth="2" shapeRendering="auto" />
        {DOTS.map(([x, y]) => <path key={x + "," + y} d={`M${x - 2} ${y - 4.5}h4l2.500 2.500v4l-2.500 2.500h-4l-2.500-2.500v-4z`} fill={G} />)}
        <path d="M667 686h8v8h-8zM894 710h8v8h-8zM975 686h8v8h-8zM1072 742h8v8h-8zM1153 750h8v8h-8zM1266 750h9v8h-9z" fill="#4040ff" />
        <path d="M1072 653h8v16h-8zM1153 669h8v8h-8zM1266 686h9v8h-9z" fill="#ff4040" />
        <path d="M1149.500 796V811M1142 803.500H1157M1147 797.500H1152L1155.500 801V806L1152 809.500H1147L1143.500 806V801Z" stroke="#0000b0" />
        <g fill="#111" fontSize="19">
          <text x="915.500" y="562">Q1</text><text x="721.500" y="626">V1</text><text x="1094.500" y="594">Q2</text><text x="1291.500" y="720">D1</text>
          <g fontSize="13"><text x="915.500" y="580" textLength="40.500">BC548</text><text x="721.500" y="645">10v</text><text x="1094.500" y="612" textLength="40.500">BC548</text><text x="1291.500" y="739" textLength="67.500">LED-AQUA</text></g>
        </g>
      </svg>
    </div>
  );
}

function StatusBar() {
  return (
    <div className="flex h-[41px] gap-[5px] font-['Liberation_Sans'] text-[16px] text-[#111]">
      <div className={"flex w-[377px] items-center border-r border-[#a9c9dd] pl-[4px] pt-px " + BAR}>
        <Grip tall="h-[39px]" />
        <svg viewBox="0 0 32 32" className="ml-[14px] h-8 w-8"><path d="M.500 .500L31 16L.500 31.500Z" fill="url(#green)" stroke="#284" strokeWidth=".7" /></svg>
        <svg viewBox="0 0 33 32" className="ml-[20px] h-8 w-[33px]"><path d="M.500 .500H4.500V31.500H.500ZM9.500 .500L31.500 16L9.500 31.500Z" fill="url(#blueV)" stroke="#357" strokeWidth=".7" /></svg>
        <svg viewBox="0 0 22 32" className="ml-[24px] h-8 w-[22px]"><path d="M.500 .500H8.500V31.500H.500ZM13.500 .500H21.500V31.500H13.500Z" fill="url(#blueV)" stroke="#357" strokeWidth=".7" /></svg>
        <svg viewBox="0 0 32 32" className="ml-[25px] h-8 w-8"><path d="M.500 1H31.500V31.500H.500Z" fill="url(#blueV)" stroke="#357" strokeWidth=".7" /></svg>
        <div className="ml-[10px]"><Sep /></div>
        <svg viewBox="0 0 32 32" className="ml-[7px] h-8 w-8"><circle cx="16" cy="16" r="15.500" fill="url(#green)" /><circle cx="15.500" cy="7.500" r="2.900" fill="#fff" /><path d="M11 12.500H18V23.500H21V26H11V23.500H13.500V15H11Z" fill="#fff" /></svg>
        <span className="ml-[8px] mt-px whitespace-nowrap">2 Message(s)</span>
      </div>
      <div className={"flex w-[412px] items-center border-r border-[#a9c9dd] pl-[3px] pt-px " + BAR}>
        <Grip tall="h-[39px]" /><span className="ml-[7px] mt-px tracking-[-0.1px]">Shows the 2D graphics styles.</span>
      </div>
      <div className={"flex flex-1 items-center pl-[3px] " + BAR}><Grip tall="h-[39px]" /></div>
    </div>
  );
}

export default function App() {
  return (
    <div className="flex h-[1126px] w-[1918px] flex-col overflow-hidden bg-[linear-gradient(to_right,#e2e9f1,#ebf2fb)]">
      <Defs />
      <Header />
      <Toolbars />
      <TabStrip />
      <div className="flex h-[886px] shrink-0">
        <LeftColumns />
        <Sidebar />
        <Canvas />
        <div className="h-[884px] flex-1 bg-[#b4d3e6]" />
      </div>
      <StatusBar />
    </div>
  );
}
